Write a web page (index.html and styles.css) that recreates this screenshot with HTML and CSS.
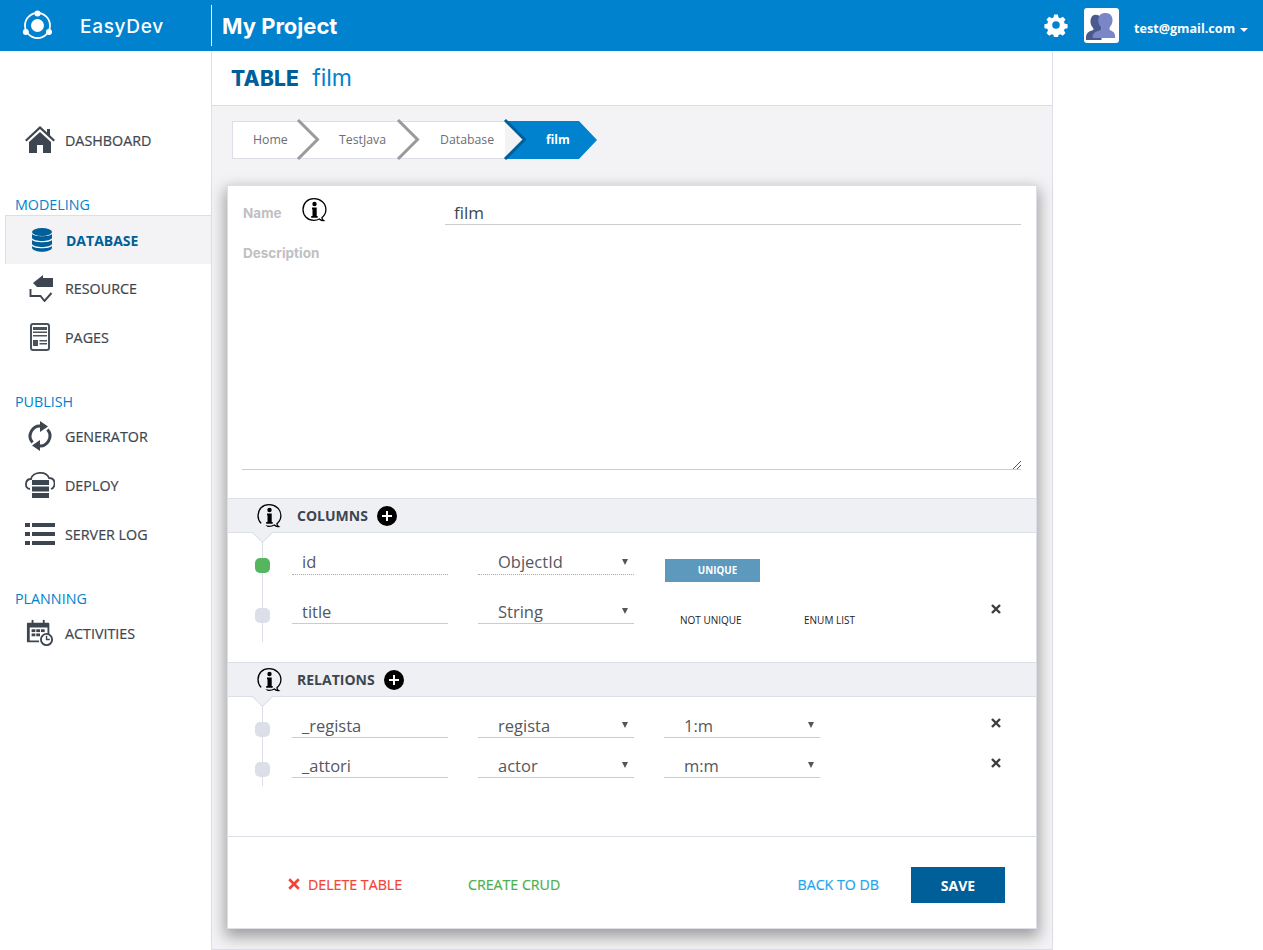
FILE: index.html
```
<!DOCTYPE html>
<html lang="en">
<head>
<meta charset="utf-8">
<title>EasyDev</title>
<link rel="stylesheet" href="styles.css">
</head>
<body>
<header class="topbar">
  <div class="brand">
    <svg class="logo" viewBox="0 0 32 32" width="32" height="32">
      <circle cx="15.5" cy="15.5" r="12.5" fill="none" stroke="#fff" stroke-width="1.8"/>
      <circle cx="15.5" cy="15.5" r="6.5" fill="#fff"/>
      <circle cx="15.5" cy="3.5" r="3" fill="#fff"/>
      <circle cx="3.800" cy="22" r="3" fill="#fff"/>
      <circle cx="27" cy="22" r="3" fill="#fff"/>
    </svg>
    <span class="brand-name">EasyDev</span>
  </div>
  <div class="project">My Project</div>
  <div class="account">
    <svg class="gear" viewBox="0 0 24 24" width="24" height="24"><path fill="#fff" fill-rule="evenodd" d="M10 1h4l.6 3 2 .9 2.6-1.6 2.8 2.8-1.6 2.6.8 2 3 .6v4l-3 .6-.8 2 1.6 2.6-2.8 2.8-2.6-1.6-2 .8-.6 3h-4l-.6-3-2-.8-2.6 1.6-2.8-2.8 1.6-2.6-.8-2-3-.6v-4l3-.6.8-2-1.6-2.6 2.8-2.8 2.6 1.6 2-.9zM12 8a4 4 0 1 0 0 8 4 4 0 0 0 0-8z" transform="translate(.6 .6) scale(.95)"/></svg>
    <div class="avatar">
      <svg viewBox="0 0 34 34" width="33" height="33">
        <path fill="#4b5a8c" d="M1 30c0-6 4-7 7-8 1-1 1-2 0-3-2-2-3-6-2-9 1-3 3-4 5-4s5 1 6 4v22H1z"/>
        <path fill="#7b86c8" d="M8 30v-2c0-4 5-5 8-6 1-1 1-2 0-4-2-2-3-6-2-9 1-4 4-5 7-5s6 1 7 5c1 3 0 7-2 9-1 2-1 3 0 4 2 1 5 2 5 6v2z"/>
      </svg>
    </div>
    <span class="email">test@gmail.com</span>
    <span class="caret"></span>
  </div>
</header>

<div class="shell">
  <nav class="sidebar">
    <a class="nav-item nav-first">
      <svg class="nav-icon" viewBox="0 0 30 28"><path fill="#3d4650" d="M15 0 0 14l1.500 1.500L15 3l13.500 12.500L30 14l-5-4.700V3h-3v3.500z"/><path fill="#3d4650" d="M4 16 15 6l11 10v11h-8v-8h-6v8H4z"/></svg>
      <span>DASHBOARD</span>
    </a>
    <h2 class="nav-group">MODELING</h2>
    <a class="nav-item nav-active">
      <svg class="nav-icon" viewBox="0 0 30 24"><g fill="#005f99"><ellipse cx="15" cy="4" rx="10" ry="4"/><path d="M5 6c2 3 18 3 20 0v4c-2 4-18 4-20 0z"/><path d="M5 12c2 3 18 3 20 0v4c-2 4-18 4-20 0z"/><path d="M5 18c2 3 18 3 20 0v2c-2 5-18 5-20 0z"/></g></svg>
      <span>DATABASE</span>
    </a>
    <a class="nav-item">
      <svg class="nav-icon" viewBox="0 0 30 28"><path fill="#3d4650" d="M8 9 18 1v3h10v9H12z"/><path fill="none" stroke="#3d4650" stroke-width="1.900" d="M5.500 15v7h10l4 5 7-8"/></svg>
      <span>RESOURCE</span>
    </a>
    <a class="nav-item">
      <svg class="nav-icon" viewBox="0 0 30 28"><rect x="6" y="1" width="18" height="26" rx="2" fill="#fff" stroke="#4a525c" stroke-width="2"/><g fill="#4a525c"><rect x="8" y="4" width="14" height="3"/><rect x="8" y="8.500" width="14" height="1.500"/><rect x="8" y="12" width="14" height="1.500"/><rect x="8" y="17" width="5" height="6"/><rect x="14.500" y="17" width="7.500" height="1.500"/><rect x="14.500" y="20" width="7.500" height="1.500"/></g></svg>
      <span>PAGES</span>
    </a>
    <h2 class="nav-group">PUBLISH</h2>
    <a class="nav-item">
      <svg class="nav-icon nav-icon-tall" viewBox="0 0 30 30"><g fill="none" stroke="#3d4650" stroke-width="3"><path d="M7.500 21.500A10 10 0 0 1 17 5.200"/><path d="M22.500 8.500A10 10 0 0 1 13 24.800"/></g><path fill="#3d4650" d="M15 0l8 5.500-8 5.500zM15 30l-8-5.500 8-5.500z"/></svg>
      <span>GENERATOR</span>
    </a>
    <a class="nav-item">
      <svg class="nav-icon" viewBox="0 0 30 28"><path fill="none" stroke="#3d4650" stroke-width="1.800" d="M5 18C-1 17 0 8 6 8c1-7 15-9 18-1 7 0 7 9 2 11"/><g fill="#3d4650"><rect x="7" y="9" width="17" height="5"/><rect x="7" y="15.500" width="17" height="5"/><rect x="7" y="22" width="17" height="5"/></g></svg>
      <span>DEPLOY</span>
    </a>
    <a class="nav-item">
      <svg class="nav-icon" viewBox="0 0 30 22"><g fill="#3d4650"><rect y="0" width="5" height="4"/><rect x="7" y="0" width="23" height="4"/><rect y="9" width="5" height="4"/><rect x="7" y="9" width="23" height="4"/><rect y="18" width="5" height="4"/><rect x="7" y="18" width="23" height="4"/></g></svg>
      <span>SERVER LOG</span>
    </a>
    <h2 class="nav-group">PLANNING</h2>
    <a class="nav-item">
      <svg class="nav-icon" viewBox="0 0 30 30"><path fill="#3d4650" d="M2 4h22a1 1 0 0 1 1 1v11h-2V9H4v14h10v2H2a1 1 0 0 1-1-1V5a1 1 0 0 1 1-1z"/><g fill="#3d4650"><rect x="6" y="1" width="2" height="5"/><rect x="18" y="1" width="2" height="5"/><rect x="6" y="11" width="4" height="3"/><rect x="11" y="11" width="4" height="3"/><rect x="16" y="11" width="4" height="3"/><rect x="6" y="15.500" width="4" height="3"/><rect x="11" y="15.500" width="4" height="3"/></g><circle cx="22" cy="22" r="6" fill="#fff" stroke="#3d4650" stroke-width="2"/><path fill="none" stroke="#3d4650" stroke-width="1.500" d="M22 18v4h3.500"/></svg>
      <span>ACTIVITIES</span>
    </a>
  </nav>

  <main class="main">
    <div class="page-title"><b>TABLE</b><span>film</span></div>
    <div class="content">
      <div class="crumbs">
        <span class="crumb crumb-home">Home</span>
        <span class="crumb crumb-java">TestJava</span>
        <span class="crumb crumb-db">Database</span>
        <span class="crumb-current">film</span>
        <svg class="crumb-lines" viewBox="0 0 365 38" width="365" height="38">
          <path d="M66 -1 85.500 18.500 66 38M166 -1 185.500 18.500 166 38" fill="none" stroke="#9a9a9a" stroke-width="3"/>
          <path d="M273 -1 292.500 18.500 273 38" fill="none" stroke="#005f99" stroke-width="3"/>
        </svg>
      </div>

      <section class="card">
        <div class="fields">
          <div class="name-row">
            <label class="field-label">Name</label>
            <svg class="info info-name" viewBox="0 0 26 26"><use href="#info"/></svg>
            <div class="name-value">film</div>
          </div>
          <label class="field-label description-label">Description</label>
          <div class="textarea">
            <svg class="grip" viewBox="0 0 9 9" width="9" height="9"><path d="M1 9 9 1M5 9l4-4" stroke="#555" stroke-width="1" fill="none"/></svg>
          </div>
        </div>

        <div class="section-head">
          <svg class="info" viewBox="0 0 26 26"><use href="#info"/></svg>
          <span class="section-title">COLUMNS</span>
          <span class="plus"></span>
        </div>
        <div class="rows rows-columns">
          <div class="row">
            <span class="dot dot-green"></span>
            <div class="field field-dotted">id</div>
            <div class="field field-dotted select">ObjectId</div>
            <button class="unique">UNIQUE</button>
          </div>
          <div class="row row-second">
            <span class="dot"></span>
            <div class="field">title</div>
            <div class="field select">String</div>
            <span class="flag flag-a">NOT UNIQUE</span>
            <span class="flag flag-b">ENUM LIST</span>
            <svg class="remove" viewBox="0 0 10 10" width="10" height="10"><use href="#cross"/></svg>
          </div>
        </div>

        <div class="section-head">
          <svg class="info" viewBox="0 0 26 26"><use href="#info"/></svg>
          <span class="section-title">RELATIONS</span>
          <span class="plus"></span>
        </div>
        <div class="rows rows-relations">
          <div class="row row-rel">
            <span class="dot"></span>
            <div class="field">_regista</div>
            <div class="field select">regista</div>
            <div class="field select">1:m</div>
            <svg class="remove" viewBox="0 0 10 10" width="10" height="10"><use href="#cross"/></svg>
          </div>
          <div class="row row-rel">
            <span class="dot"></span>
            <div class="field">_attori</div>
            <div class="field select">actor</div>
            <div class="field select">m:m</div>
            <svg class="remove" viewBox="0 0 10 10" width="10" height="10"><use href="#cross"/></svg>
          </div>
        </div>

        <footer class="actions">
          <a class="act act-delete"><svg class="act-x" viewBox="0 0 10 10" width="12" height="12"><path d="M1 1l8 8M9 1 1 9" stroke="#f44336" stroke-width="2.200" fill="none"/></svg>DELETE TABLE</a>
          <a class="act act-crud">CREATE CRUD</a>
          <a class="act act-back">BACK TO DB</a>
          <button class="save">SAVE</button>
        </footer>
      </section>
    </div>
  </main>
</div>

<svg class="defs" width="0" height="0">
  <symbol id="info" viewBox="0 0 26 26">
    <g transform="translate(-1 0)">
      <path fill="none" stroke="#000" stroke-width="1.300" d="M13 1.700c-6.500 0-11 4.600-11 10.800s4.500 10.800 11 10.800c2 0 3.800-.4 5.400-1.300.8 1 2.300 1.700 4.100 1.500-1-.6-1.500-1.500-1.600-2.800 2.500-2 4-4.800 4-8.200 0-6.200-5.400-10.800-11.900-10.800z"/>
      <circle cx="13.500" cy="7" r="2.200" fill="#000"/>
      <path fill="#000" d="M11 10.500h4.700v8.500h1v1.700h-6.500V19h1.300v-6.800h-.5z"/>
    </g>
  </symbol>
  <symbol id="cross" viewBox="0 0 10 10">
    <path d="M1 1l8 8M9 1 1 9" stroke="#3d3d3d" stroke-width="2.400" fill="none"/>
  </symbol>
</svg>
</body>
</html>
```
FILE: styles.css
```
* { box-sizing: border-box; }
html, body { margin: 0; padding: 0; }
body {
  width: 1263px;
  height: 950px;
  overflow: hidden;
  background: #fff;
  font-family: "Open Sans", sans-serif;
  color: #3d4650;
}
.defs { position: absolute; }

.topbar {
  height: 51px;
  background: #0082ce;
  display: flex;
  align-items: center;
  color: #fff;
}
.brand { width: 211px; display: flex; align-items: center; padding-left: 22px; }
.logo { flex: none; }
.brand-name {
  margin-left: 26px;
  margin-top: 2px;
  font-family: Inter, sans-serif;
  font-size: 19px;
  font-weight: 500;
  letter-spacing: .7px;
}
.project {
  height: 41px;
  padding-left: 10px;
  border-left: 1px solid #fff;
  line-height: 43px;
  font-family: Inter, sans-serif;
  font-size: 22px;
  font-weight: 700;
}
.account { margin-left: auto; display: flex; align-items: center; padding-right: 15px; }
.gear { margin: -2px 16px 0 0; }
.avatar { width: 35px; height: 35px; background: #fff; border-radius: 3px; padding: 1px; margin-right: 15px; }
.avatar svg { display: block; }
.email { margin-top: 6px; font-size: 12.6px; font-weight: 700; }
.caret { margin-left: 5px; margin-top: 9px; border: 4px solid transparent; border-top-color: #fff; border-bottom: 0; }

.shell { display: flex; height: 899px; }
.sidebar { width: 211px; flex: none; padding-top: 65px; }
.nav-item {
  display: flex;
  align-items: center;
  height: 48px;
  margin-bottom: 1px;
  padding-left: 25px;
  font-size: 14.3px;
  font-weight: 500;
  -webkit-text-stroke: .2px #3d4650;
  color: #3d4650;
}
.nav-icon { width: 30px; height: 28px; margin-right: 10px; flex: none; }
.nav-icon-tall { height: 30px; }
.nav-group {
  margin: 31px 0 0 15px;
  height: 20px;
  line-height: 20px;
  font-size: 14.3px;
  font-weight: 400;
  color: #0082ce;
}
.nav-active {
  height: 49px;
  margin-left: 5px;
  padding-left: 21px;
  margin-bottom: 0;
  background: #f3f3f5;
  border-top: 1px solid #dcdfe8;
  border-left: 1px solid #dcdfe8;
  color: #005f99;
  -webkit-text-stroke: 0;
  font-size: 14px;
  font-weight: 700;
}
.nav-active .nav-icon { margin-right: 9px; }

.main {
  width: 842px;
  height: 899px;
  flex: none;
  border: 1px solid #dcdfe8;
  border-top: 0;
  display: flex;
  flex-direction: column;
}
.page-title {
  height: 55px;
  flex: none;
  background: #fff;
  border-bottom: 1px solid #dcdfe8;
  padding-left: 20px;
  display: flex;
  align-items: center;
  font-family: Inter, sans-serif;
  font-size: 21px;
}
.page-title b { color: #005f99; font-weight: 800; letter-spacing: .2px; margin-left: -1px; }
.page-title span { margin-left: 13px; color: #0082ce; font-size: 23px; font-weight: 400; }

.content { flex: 1; background: #f3f3f5; padding: 15px 15px 0; position: relative; }

.crumbs {
  position: relative;
  margin-left: 5px;
  width: 365px;
  height: 38px;
  display: flex;
  font-size: 12.3px;
  font-weight: 500;
  color: #6d6d74;
}
.crumb { background: #fff; border: 1px solid #dcdfe8; border-left: 0; border-right: 0; line-height: 36px; display: block; height: 38px; }
.crumb-home { width: 73px; padding-left: 20px; border-left: 1px solid #dcdfe8; }
.crumb-java { width: 100px; padding-left: 34px; }
.crumb-db { width: 100px; padding-left: 35px; }
.crumb-current {
  width: 92px;
  height: 38px;
  background: #0082ce;
  color: #fff;
  font-size: 12px;
  font-weight: 700;
  line-height: 38px;
  padding-left: 41px;
  clip-path: polygon(0 0, 74px 0, 92px 50%, 74px 100%, 0 100%, 19px 50%);
}
.crumb-lines { position: absolute; left: 0; top: 0; overflow: visible; }

.card {
  width: 810px;
  height: 744px;
  margin-top: 26px;
  background: #fff;
  border: 1px solid #dcdfe8;
  box-shadow: 0 6px 14px 2px rgba(0, 0, 0, .35);
  display: flex;
  flex-direction: column;
}

.fields { height: 312px; padding: 13px 15px 0 14px; flex: none; }
.name-row { display: flex; align-items: flex-start; height: 26px; padding-left: 1px; }
.field-label {
  font-family: Inter, sans-serif;
  font-size: 13.500px;
  font-weight: 700;
  color: #c0c0c2;
  line-height: 30px;
}
.name-row .field-label { width: 59px; line-height: 28px; flex: none; }
.description-label { display: block; margin: 13px 0 0 1px; height: 30px; }
.info { width: 26px; height: 26px; flex: none; }
.info-name { margin: -2px 117px 0 0; }
.name-value {
  width: 576px;
  height: 26px;
  flex: none;
  border-bottom: 1px solid #ccc;
  padding-left: 9px;
  font-size: 17px;
  line-height: 28px;
}
.textarea {
  position: relative;
  height: 205px;
  margin-top: -3px;
  border-bottom: 1px solid #ccc;
}
.grip { position: absolute; right: 0; bottom: 0; }

.section-head {
  height: 35px;
  flex: none;
  background: #eff0f4;
  border-top: 1px solid #dcdfe8;
  border-bottom: 1px solid #dcdfe8;
  display: flex;
  align-items: center;
  padding-left: 29px;
  position: relative;
}
.section-head::after {
  content: "";
  position: absolute;
  left: 27px;
  top: 26px;
  width: 14px;
  height: 14px;
  background: #eff0f4;
  border-right: 1px solid #dcdfe8;
  border-bottom: 1px solid #dcdfe8;
  transform: rotate(45deg);
}
.section-title { margin-left: 14px; font-size: 14px; font-weight: 700; }
.plus { position: relative; width: 20px; height: 20px; margin-left: 9px; border-radius: 50%; background: #000; }
.plus::before, .plus::after { content: ""; position: absolute; background: #fff; }
.plus::before { left: 5px; top: 9px; width: 10px; height: 2px; }
.plus::after { left: 9px; top: 5px; width: 2px; height: 10px; }

.rows { position: relative; flex: none; padding-left: 64px; }
.rows::before {
  content: "";
  position: absolute;
  left: 34px;
  top: 8px;
  width: 1px;
  background: #dcdfe8;
}
.rows-columns { height: 129px; padding-top: 15px; }
.rows-columns::before { height: 101px; }
.rows-relations { height: 139px; padding-top: 14px; }
.rows-relations::before { height: 81px; }
.row { display: flex; gap: 30px; position: relative; height: 27px; align-items: flex-start; }
.row-second { margin-top: 22px; }
.row-rel { margin-bottom: 13px; }
.dot { position: absolute; left: -37px; top: 11px; width: 15px; height: 15px; border-radius: 5px; background: #dcdfe8; }
.dot-green { top: 10px; background: #56b65f; }
.field {
  position: relative;
  width: 156px;
  height: 27px;
  flex: none;
  border-bottom: 1px solid #ccc;
  padding-left: 10px;
  font-size: 16.5px;
  line-height: 29px;
  color: #54585f;
}
.field-dotted { border-bottom: 1px dotted #aaa; line-height: 27px; }
.select { padding-left: 20px; }
.select::after {
  content: "";
  position: absolute;
  right: 6px;
  top: 11px;
  border: 3.500px solid transparent;
  border-top: 6px solid #555;
  border-bottom: 0;
}
.unique {
  width: 95px;
  height: 23px;
  margin: 11px 0 0 1px;
  padding: 0 0 0 10px;
  border: 0;
  background: #5c99bd;
  color: #fff;
  font-family: "Open Sans", sans-serif;
  font-size: 9.800px;
  font-weight: 700;
}
.flag { position: absolute; top: 16px; font-size: 10px; font-weight: 400; color: #222; line-height: 14px; }
.flag-a { left: 388px; }
.flag-b { left: 512px; }
.remove { position: absolute; left: 699px; top: 7px; }

.actions {
  flex: 1;
  border-top: 1px solid #dcdfe8;
  display: flex;
  align-items: center;
  padding: 5px 31px 0 60px;
  font-size: 14.2px;
  font-weight: 500;
}
.act { white-space: nowrap; margin-top: -2px; -webkit-text-stroke: .2px currentColor; }
.act-delete { color: #f44336; display: flex; align-items: center; width: 180px; }
.act-x { margin-right: 8px; }
.act-crud { color: #4caf50; }
.act-back { margin-left: auto; margin-right: 32px; color: #1ea5ec; }
.save {
  width: 94px;
  height: 36px;
  border: 0;
  background: #005f99;
  color: #fff;
  font-family: "Open Sans", sans-serif;
  font-size: 14px;
  font-weight: 700;
}
```
